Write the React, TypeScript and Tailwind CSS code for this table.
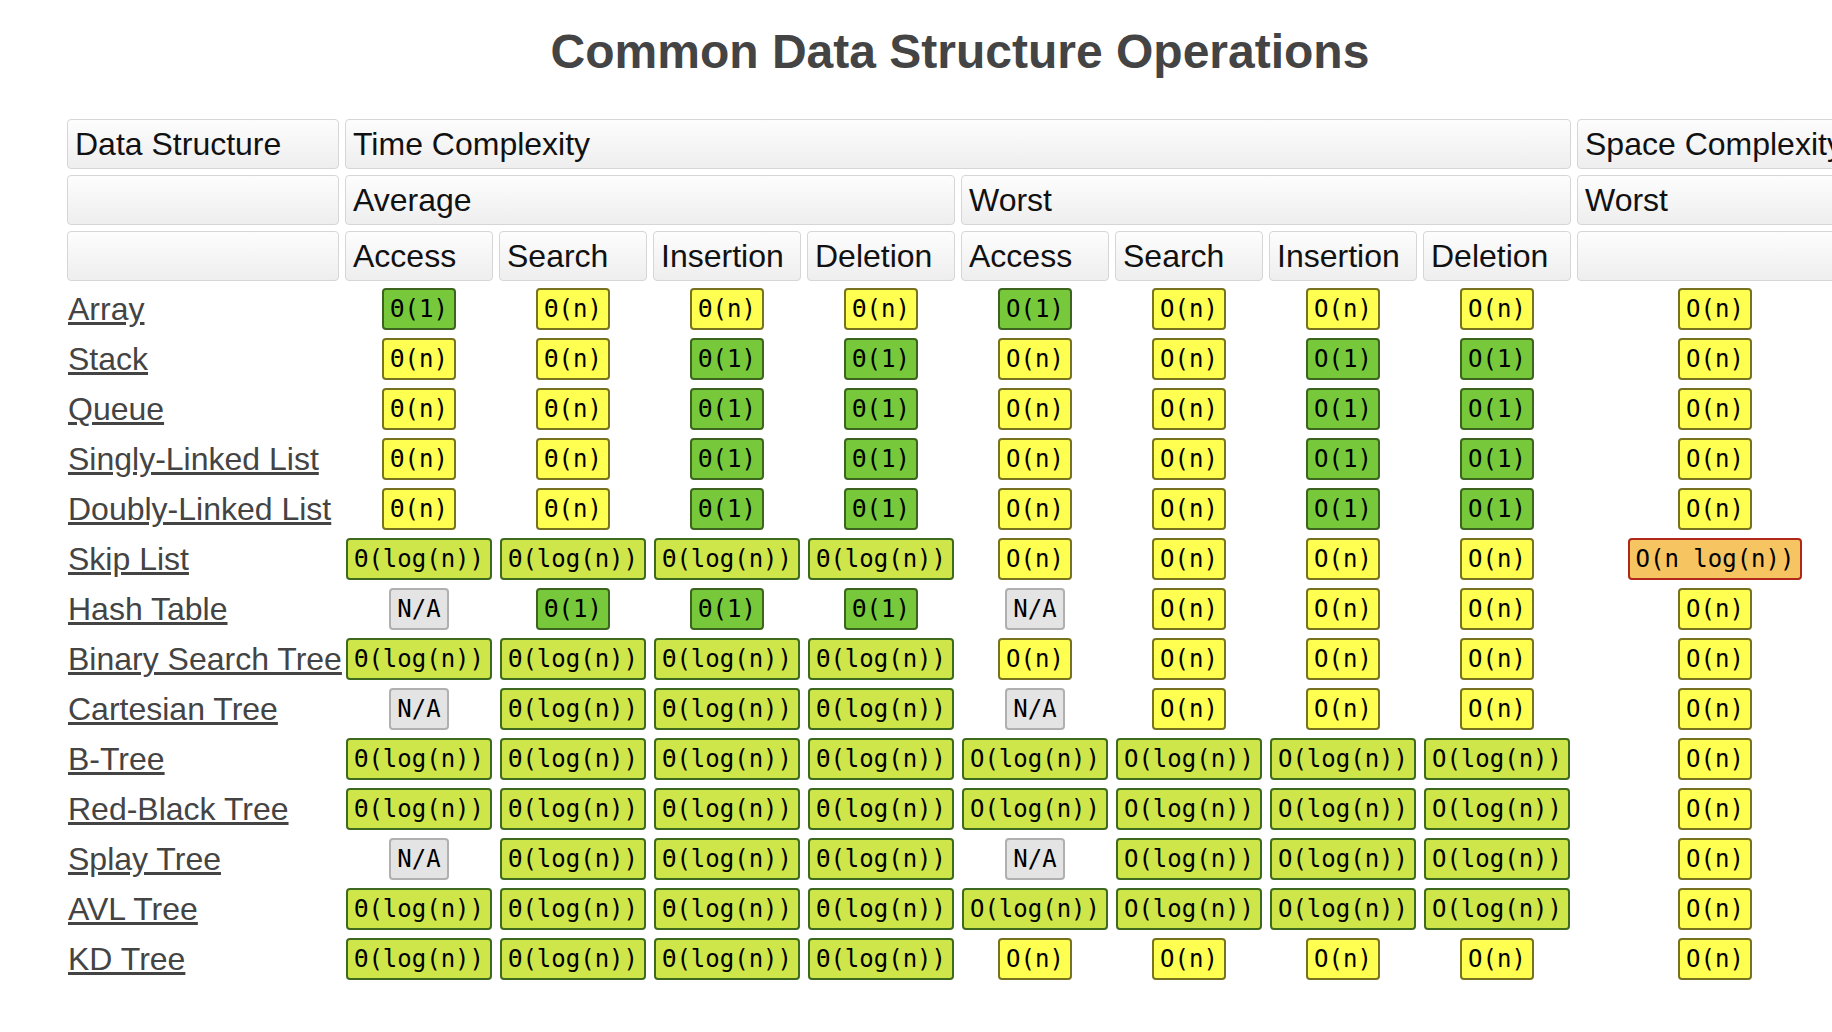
import React from "react";

type Code = "T1" | "Tn" | "Tl" | "O1" | "On" | "Ol" | "Onl" | "NA";

const badge: Record<Code, { text: string; cls: string }> = {
  T1: { text: "Θ(1)", cls: "bg-[#77c93b] border-[#3c641e]" },
  Tn: { text: "Θ(n)", cls: "bg-[#ffff52] border-[#76721f]" },
  Tl: { text: "Θ(log(n))", cls: "bg-[#cee64a] border-[#3d6a1e]" },
  O1: { text: "O(1)", cls: "bg-[#77c93b] border-[#3c641e]" },
  On: { text: "O(n)", cls: "bg-[#ffff52] border-[#76721f]" },
  Ol: { text: "O(log(n))", cls: "bg-[#cee64a] border-[#3d6a1e]" },
  Onl: { text: "O(n log(n))", cls: "bg-[#f6c460] border-[#b0281a]" },
  NA: { text: "N/A", cls: "bg-[#e4e4e4] border-[#b0b0b0]" },
};

const linear: Code[] = ["Tn", "Tn", "T1", "T1", "On", "On", "O1", "O1", "On"];
const balanced: Code[] = ["Tl", "Tl", "Tl", "Tl", "Ol", "Ol", "Ol", "Ol", "On"];

const rows: { name: string; cells: Code[] }[] = [
  { name: "Array", cells: ["T1", "Tn", "Tn", "Tn", "O1", "On", "On", "On", "On"] },
  { name: "Stack", cells: linear },
  { name: "Queue", cells: linear },
  { name: "Singly-Linked List", cells: linear },
  { name: "Doubly-Linked List", cells: linear },
  { name: "Skip List", cells: ["Tl", "Tl", "Tl", "Tl", "On", "On", "On", "On", "Onl"] },
  { name: "Hash Table", cells: ["NA", "T1", "T1", "T1", "NA", "On", "On", "On", "On"] },
  { name: "Binary Search Tree", cells: ["Tl", "Tl", "Tl", "Tl", "On", "On", "On", "On", "On"] },
  { name: "Cartesian Tree", cells: ["NA", "Tl", "Tl", "Tl", "NA", "On", "On", "On", "On"] },
  { name: "B-Tree", cells: balanced },
  { name: "Red-Black Tree", cells: balanced },
  { name: "Splay Tree", cells: ["NA", "Tl", "Tl", "Tl", "NA", "Ol", "Ol", "Ol", "On"] },
  { name: "AVL Tree", cells: balanced },
  { name: "KD Tree", cells: ["Tl", "Tl", "Tl", "Tl", "On", "On", "On", "On", "On"] },
];

const th =
  "h-[50px] flex items-center pl-[7px] border border-[#d6d6d6] rounded-[4px] bg-linear-to-b from-[#fdfdfd] to-[#eeeeee] text-[32px] text-[#111] whitespace-nowrap overflow-hidden";

function Badge({ code }: { code: Code }) {
  const b = badge[code];
  return (
    <span
      className={`inline-flex h-[42px] items-center px-[6px] border-2 rounded-[4px] text-[24px] text-black font-['DejaVu_Sans_Mono',monospace] whitespace-pre ${b.cls}`}
    >
      {b.text}
    </span>
  );
}

export default function App() {
  return (
    <div className="w-screen h-screen overflow-hidden bg-white font-['Liberation_Sans',Arial,sans-serif]">
      <div className="w-[1920px]">
        <h1 className="pt-[24px] text-center text-[48px] leading-[56px] font-bold text-[#444]">
          Common Data Structure Operations
        </h1>
        <div className="mt-[39px] pl-[67px]">
          <div className="grid grid-cols-[272px_repeat(8,148px)_276px] gap-[6px]">
            <div className={th}>Data Structure</div>
            <div className={`${th} col-span-8`}>Time Complexity</div>
            <div className={th}>Space Complexity</div>

            <div className={th}></div>
            <div className={`${th} col-span-4`}>Average</div>
            <div className={`${th} col-span-4`}>Worst</div>
            <div className={th}>Worst</div>

            <div className={th}></div>
            <div className={th}>Access</div>
            <div className={th}>Search</div>
            <div className={th}>Insertion</div>
            <div className={th}>Deletion</div>
            <div className={th}>Access</div>
            <div className={th}>Search</div>
            <div className={th}>Insertion</div>
            <div className={th}>Deletion</div>
            <div className={th}></div>

            {rows.map((r) => (
              <React.Fragment key={r.name}>
                <div className="h-[44px] flex items-center pl-px whitespace-nowrap">
                  <a href="#" className="text-[32px] text-[#444] underline">
                    {r.name}
                  </a>
                </div>
                {r.cells.map((c, i) => (
                  <div key={i} className="h-[44px] flex items-center justify-center">
                    <Badge code={c} />
                  </div>
                ))}
              </React.Fragment>
            ))}
          </div>
        </div>
      </div>
    </div>
  );
}
